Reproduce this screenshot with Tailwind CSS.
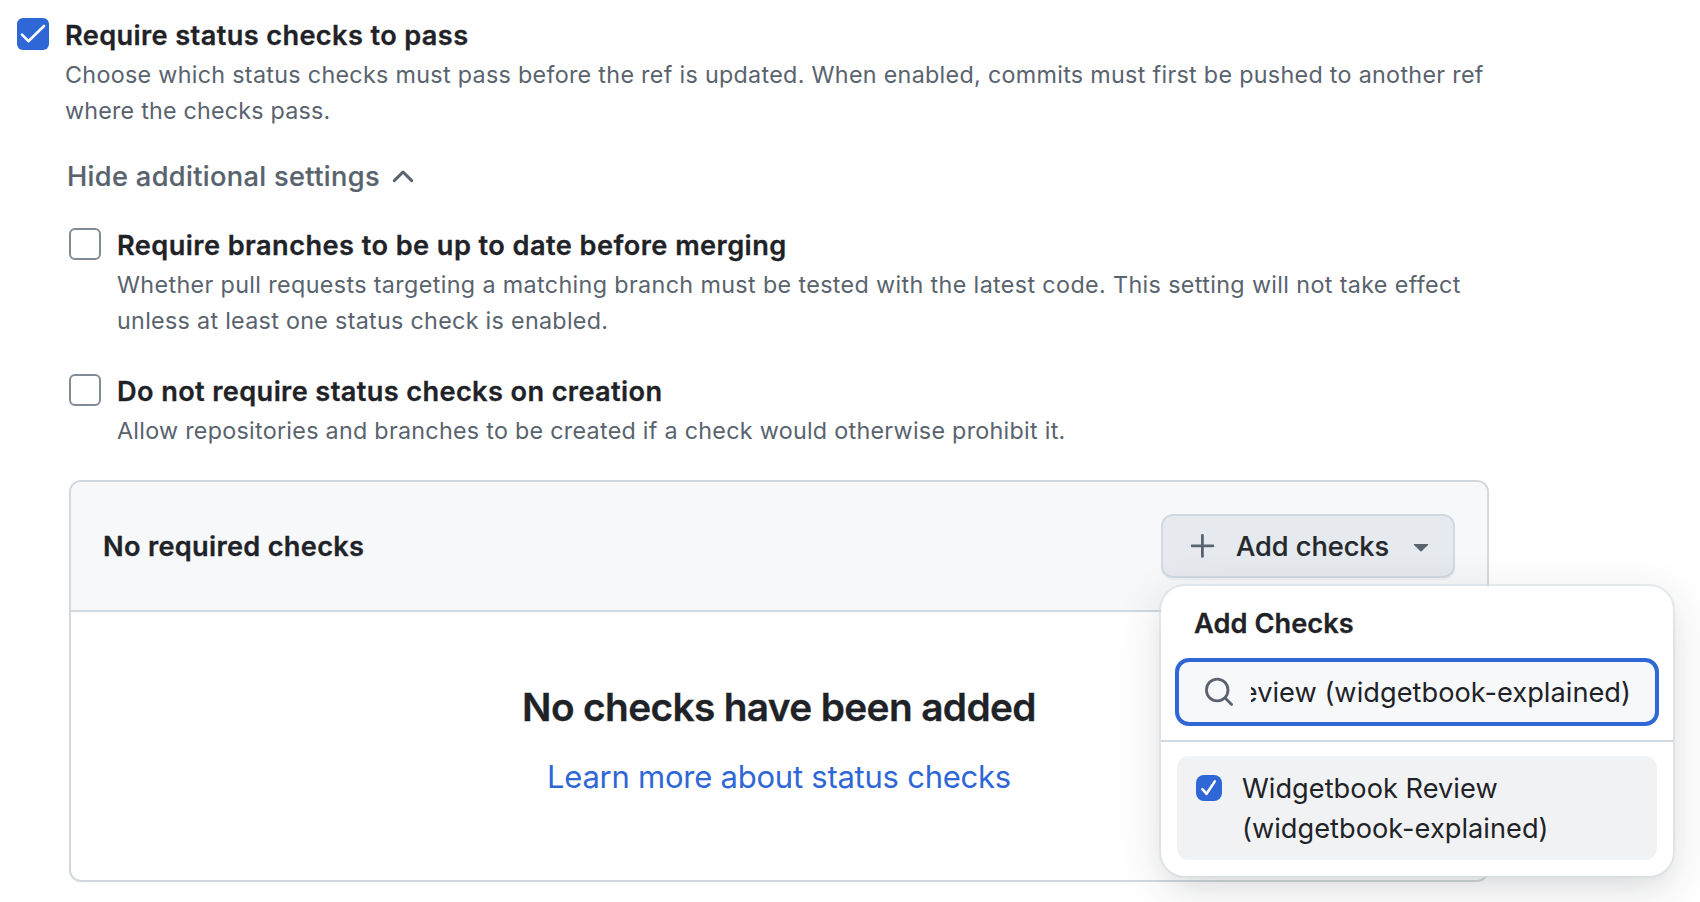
<!DOCTYPE html>
<html lang="en">
<head>
<meta charset="utf-8">
<title>Require status checks</title>
<script src="https://cdn.jsdelivr.net/npm/@tailwindcss/browser@4"></script>
</head>
<body class="bg-white font-['Inter',sans-serif] text-[#1f2328] overflow-hidden">
<main class="w-[1700px] h-[902px] overflow-hidden pt-[15px] pl-[17px]">

  <div class="flex items-start gap-4">
    <span class="mt-[3px] flex size-8 shrink-0 items-center justify-center rounded-md bg-[#2f67d6]">
      <svg class="size-8" viewBox="0 0 32 32" fill="none" stroke="#fff" stroke-width="2.6" stroke-linecap="round" stroke-linejoin="round"><path d="M5 16.6 L11.4 23.2 L27 8"/></svg>
    </span>
    <div>
      <h3 class="pt-px text-[27.2px]/10 font-semibold tracking-[0.37px] [-webkit-text-stroke:0.3px]">Require status checks to pass</h3>
      <p class="mt-px text-[23.3px]/9 text-[#59636e] whitespace-nowrap"><span class="tracking-[0.306px]">Choose which status checks must pass before the ref is updated. When enabled, commits must first be pushed to another ref</span><br><span class="tracking-[0.2px]">where the checks pass.</span></p>
    </div>
  </div>

  <button class="mt-[28px] ml-[50px] flex items-center text-[27.2px]/10 font-medium tracking-[0.35px] text-[#59636e] [-webkit-text-stroke:0.2px]">
    <span>Hide additional settings</span>
    <svg class="-mt-[2px] ml-[11px] h-4 w-6" viewBox="0 0 24 16" fill="none" stroke="#59636e" stroke-width="3" stroke-linecap="round" stroke-linejoin="round"><path d="M3.3 12.6 L12 4 L20.7 12.6"/></svg>
  </button>

  <div class="mt-[28px] ml-[52px] flex items-start gap-4">
    <span class="mt-[3px] size-8 shrink-0 rounded-md border-2 border-[#818b98] bg-white"></span>
    <div>
      <h3 class="pt-px text-[27.2px]/10 font-semibold tracking-[0.425px] [-webkit-text-stroke:0.3px]">Require branches to be up to date before merging</h3>
      <p class="mt-px text-[23.3px]/9 text-[#59636e] whitespace-nowrap"><span class="tracking-[0.37px]">Whether pull requests targeting a matching branch must be tested with the latest code. This setting will not take effect</span><br><span class="tracking-[0.3px]">unless at least one status check is enabled.</span></p>
    </div>
  </div>

  <div class="mt-8 ml-[52px] flex items-start gap-4">
    <span class="mt-[3px] size-8 shrink-0 rounded-md border-2 border-[#818b98] bg-white"></span>
    <div>
      <h3 class="pt-px text-[27.2px]/10 font-semibold tracking-[0.37px] [-webkit-text-stroke:0.3px]">Do not require status checks on creation</h3>
      <p class="mt-px text-[23.3px]/9 tracking-[0.28px] text-[#59636e] whitespace-nowrap">Allow repositories and branches to be created if a check would otherwise prohibit it.</p>
    </div>
  </div>

  <section class="relative mt-[31px] ml-[52px] h-[402px] w-[1420px] rounded-xl border-2 border-[#d1d9e0]">
    <header class="flex h-[130px] items-center justify-between rounded-t-[10px] border-b-2 border-[#d1d9e0] bg-[#f6f8fa] pr-8 pl-8">
      <h4 class="pt-[2px] text-[27.2px]/10 font-semibold tracking-[0.3px] [-webkit-text-stroke:0.3px]">No required checks</h4>
      <button class="flex h-16 w-[294px] items-center rounded-xl border-2 border-[#d1d9e0] bg-[#e6eaef] pl-7 shadow-[0_2px_0_rgba(31,35,40,0.04)]">
        <svg class="size-6 shrink-0" viewBox="0 0 24 24" fill="none" stroke="#59636e" stroke-width="2.8" stroke-linecap="round"><path d="M11.4 1.4V22.4M0.9 11.9H21.9"/></svg>
        <span class="ml-[21px] pt-[2px] text-[27.2px]/10 font-medium tracking-[-0.04px] whitespace-nowrap text-[#25292e] [-webkit-text-stroke:0.2px]">Add checks</span>
        <svg class="ml-6 mt-1 h-2 w-4" viewBox="0 0 16 8" fill="#59636e"><path d="M1.2 0H14.8Q15.6 .2 15 .9L8.6 7.3Q8 7.8 7.4 7.3L1 .9Q.4 .2 1.2 0Z"/></svg>
      </button>
    </header>
    <div class="flex flex-col items-center pt-[65px]">
      <h2 class="text-[38.8px]/[60px] font-semibold tracking-[-0.63px] [-webkit-text-stroke:0.3px]">No checks have been added</h2>
      <a class="mt-[16px] text-[31px]/[48px] tracking-[-0.24px] text-[#2f67d6]">Learn more about status checks</a>
    </div>

    <div class="absolute top-[104px] left-[1090px] h-[290px] w-[512px] rounded-3xl bg-white shadow-[0_0_0_2px_rgba(209,217,224,0.5),0_12px_24px_-6px_rgba(37,41,46,0.06),0_12px_48px_0_rgba(37,41,46,0.14)]">
      <h4 class="pt-[18px] pl-[33px] text-[27.2px]/10 font-semibold tracking-[0.06px] [-webkit-text-stroke:0.3px]">Add Checks</h4>
      <div class="mt-[14px] ml-[14px] flex h-[68px] w-[484px] items-center rounded-[14px] border-4 border-[#2f67d6] bg-[#f6f8fa] pl-[25px]">
        <svg class="size-8 shrink-0" viewBox="0 0 32 32" fill="none" stroke="#59636e" stroke-width="2.8" stroke-linecap="round"><circle cx="13.2" cy="14" r="10.8"/><path d="M21.1 21.9L27.6 28.4"/></svg>
        <div class="ml-[15px] flex w-[380px] justify-end overflow-hidden pt-[2px] text-[27.2px]/10 tracking-[0.03px] whitespace-nowrap"><span>Widgetbook Review (widgetbook-explained)</span></div>
      </div>
      <div class="mt-[14px] h-[2px] bg-[#d1d9e0]"></div>
      <div class="mt-[14px] ml-4 flex h-[104px] w-[480px] items-start rounded-xl bg-[#f1f2f4] pt-[13px] pl-[19px]">
        <span class="mt-[6px] flex size-[26px] shrink-0 items-center justify-center rounded-lg bg-[#2f67d6]">
          <svg class="size-[26px]" viewBox="0 0 26 26" fill="none" stroke="#fff" stroke-width="2.6" stroke-linecap="round" stroke-linejoin="round"><path d="M6.4 14.2L10.6 18.8L18.8 6.4"/></svg>
        </span>
        <p class="ml-5 text-[27.2px]/10 tracking-[0.03px] whitespace-nowrap">Widgetbook Review<br>(widgetbook-explained)</p>
      </div>
    </div>
  </section>
</main>
</body>
</html>
